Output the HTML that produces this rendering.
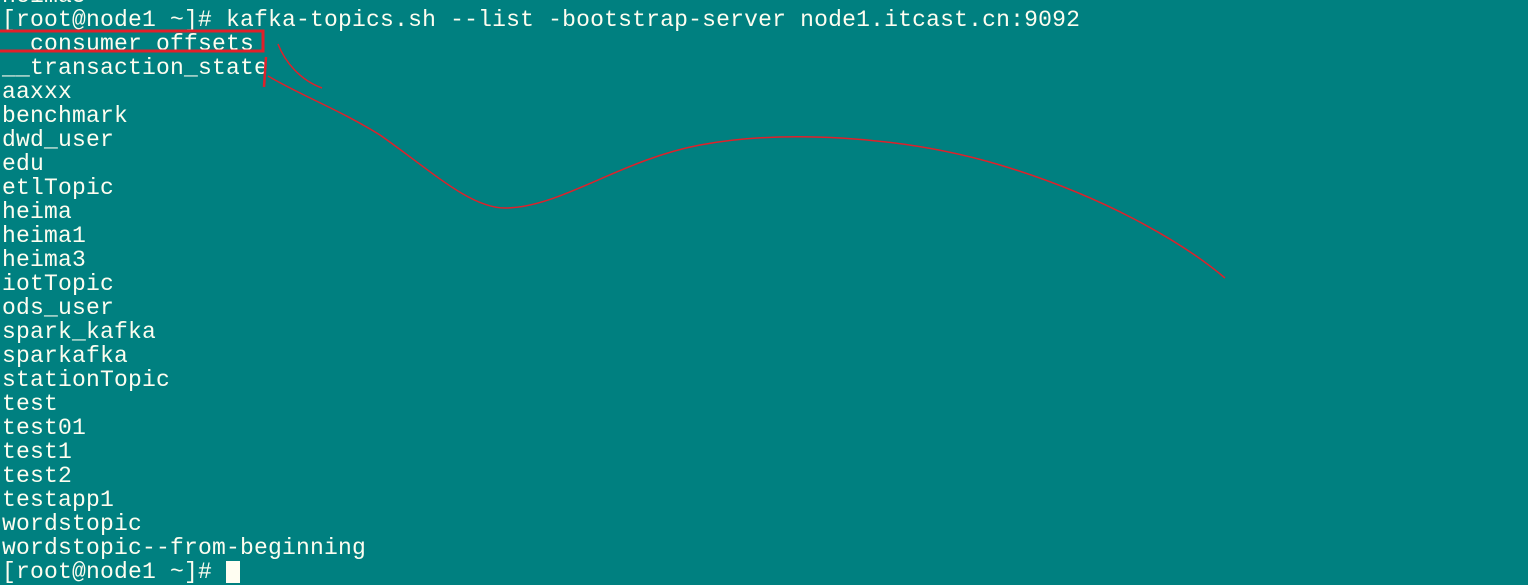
<!DOCTYPE html>
<html><head><style>
html,body{margin:0;padding:0;width:1528px;height:584px;overflow:hidden;background:#008080;}
pre{position:absolute;left:2px;top:-16px;margin:0;font-family:"Liberation Mono","DejaVu Sans Mono",monospace;font-size:23px;line-height:24px;letter-spacing:0.2px;color:#fdfdf0;}
.cur{position:absolute;left:226px;top:561px;width:14px;height:22px;background:#fffef2;}
svg{position:absolute;left:0;top:0;}
</style></head><body>
<pre>heima5
[root@node1 ~]# kafka-topics.sh --list -bootstrap-server node1.itcast.cn:9092
__consumer_offsets
__transaction_state
aaxxx
benchmark
dwd_user
edu
etlTopic
heima
heima1
heima3
iotTopic
ods_user
spark_kafka
sparkafka
stationTopic
test
test01
test1
test2
testapp1
wordstopic
wordstopic--from-beginning
[root@node1 ~]# </pre>
<div class="cur"></div>
<svg width="1528" height="584">
<rect x="-5" y="31" width="268" height="20" fill="none" stroke="#e0202a" stroke-width="3"/>
<path d="M266 57 L264 87" stroke="#e0202a" stroke-width="2.5" fill="none"/>
<path d="M278 44 C285 62 300 80 322 88" stroke="#e0202a" stroke-width="1.5" fill="none"/>
<path d="M268 76 C300 95 340 110 380 135 C430 170 470 208 505 208 C560 208 620 160 700 145 C780 130 900 135 1000 165 C1100 195 1180 240 1225 278" stroke="#e0202a" stroke-width="1.5" fill="none"/>
</svg>
</body></html>
